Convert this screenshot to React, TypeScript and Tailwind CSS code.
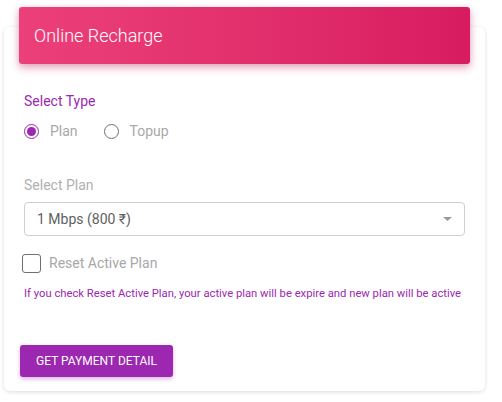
import { useState } from "react";

function Radio({ checked, label, onClick }: { checked: boolean; label: string; onClick: () => void }) {
  return (
    <button type="button" onClick={onClick} className="flex items-center gap-[11px]">
      <span
        className={`flex h-[15px] w-[15px] items-center justify-center rounded-full border-[1.5px] ${
          checked ? "border-[#9c27b0]" : "border-[#6f6f6f]"
        }`}
      >
        {checked && <span className="h-[9px] w-[9px] rounded-full bg-[#9c27b0]" />}
      </span>
      <span className="text-[14px] text-[#a8a8a8]">{label}</span>
    </button>
  );
}

export default function App() {
  const [type, setType] = useState("plan");
  const [reset, setReset] = useState(false);

  return (
    <div className="min-h-[402px] w-[502px] bg-white pt-[27px] pl-[4px] font-['Roboto',sans-serif]">
      <div className="flex h-[364px] w-[481px] flex-col rounded-[6px] bg-white px-[20px] shadow-[0_1px_4px_rgba(0,0,0,0.14)]">
        <div className="mx-[-5px] mt-[-20px] flex h-[57px] items-center rounded-[3px] bg-gradient-to-r from-[#ec407a] to-[#d81b60] px-[15px] shadow-[0_4px_10px_rgba(233,30,99,0.3),0_2px_6px_rgba(0,0,0,0.15)]">
          <h4 className="text-[18px] font-light text-white">Online Recharge</h4>
        </div>

        <div className="mt-[27px] text-[14px] text-[#9c27b0]">Select Type</div>
        <div className="mt-[9px] flex items-center gap-[26px]">
          <Radio checked={type === "plan"} label="Plan" onClick={() => setType("plan")} />
          <Radio checked={type === "topup"} label="Topup" onClick={() => setType("topup")} />
        </div>

        <div className="mt-[33px] text-[14px] text-[#b0b0b0]">Select Plan</div>
        <div className="mt-[6px] flex h-[34px] items-center justify-between rounded-[4px] border border-[#cfcfcf] pl-[12px] pr-[12px]">
          <span className="text-[14px] text-[#5f5f5f]">1 Mbps (800 ₹)</span>
          <svg width="9" height="4" viewBox="0 0 9 4">
            <path d="M0 0h9L4.5 4z" fill="#9a9a9a" />
          </svg>
        </div>

        <button type="button" onClick={() => setReset(!reset)} className="mt-[17px] ml-[-2px] flex items-center gap-[8px]">
          <span className="h-[19px] w-[19px] rounded-[3px] border-[1.5px] border-[#6f6f6f]" />
          <span className="text-[14px] text-[#a8a8a8]">Reset Active Plan</span>
        </button>
        <p className="mt-[12px] text-[11.25px] text-[#9c27b0]">
          If you check Reset Active Plan, your active plan will be expire and new plan will be active
        </p>

        <button
          type="button"
          className="mt-[42px] ml-[-4px] flex h-[32px] w-[153px] items-center justify-center rounded-[3px] bg-[#9c27b0] text-[12px] uppercase text-white shadow-[0_2px_4px_rgba(156,39,176,0.35)]"
        >
          Get Payment Detail
        </button>
      </div>
    </div>
  );
}
